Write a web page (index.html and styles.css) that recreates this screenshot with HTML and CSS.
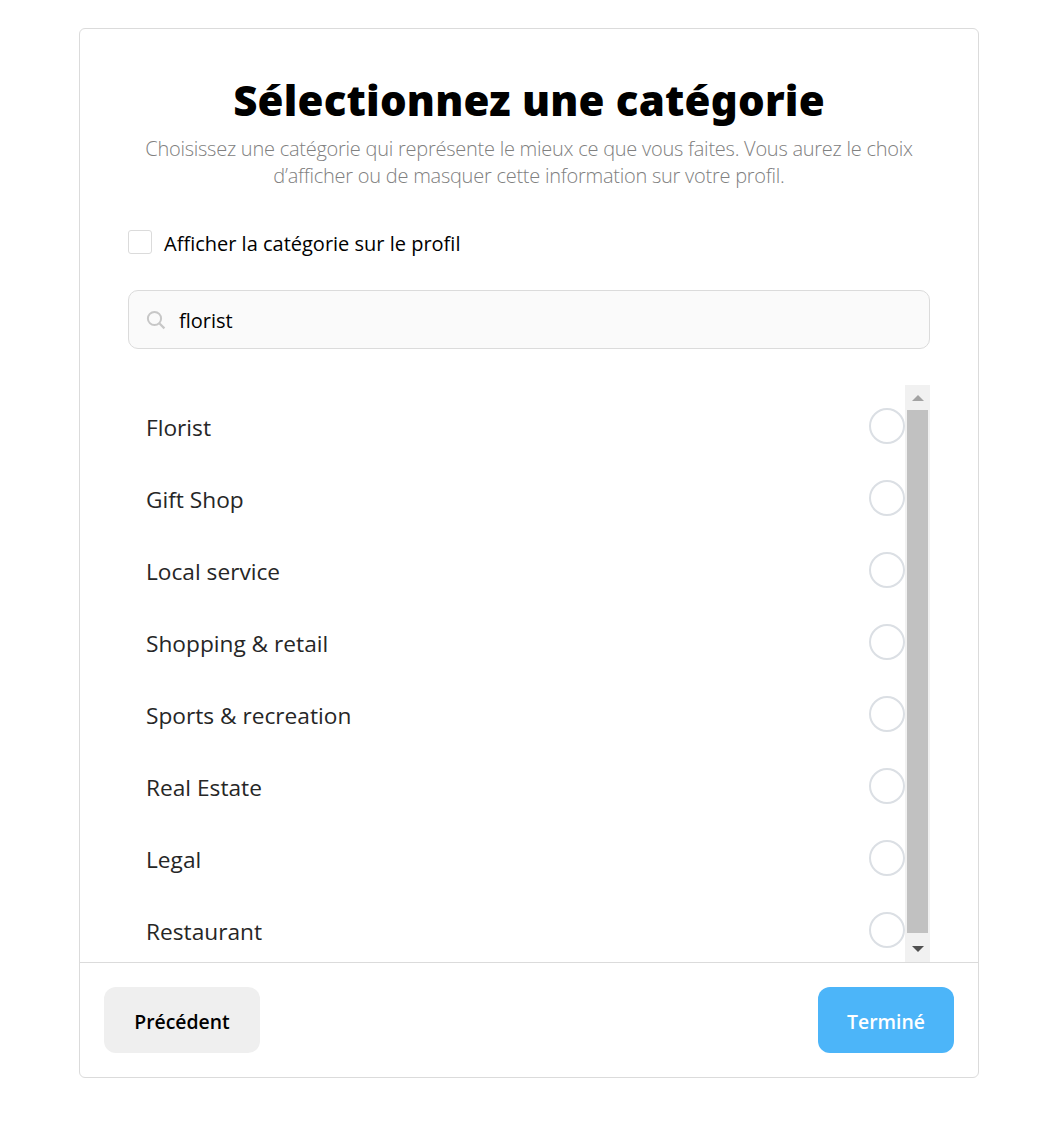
FILE: index.html
```html
<!DOCTYPE html>
<html lang="fr">
<head>
<meta charset="utf-8">
<title>Sélectionnez une catégorie</title>
<link rel="stylesheet" href="styles.css">
</head>
<body>
<main class="card">
  <div class="content">
    <h1 class="title">Sélectionnez une catégorie</h1>
    <p class="subtitle">Choisissez une catégorie qui représente le mieux ce que vous faites. Vous aurez le choix d’afficher ou de masquer cette information sur votre profil.</p>
    <label class="show-row"><span class="checkbox"></span><span class="show-label">Afficher la catégorie sur le profil</span></label>
    <div class="search">
      <svg class="search-icon" width="20" height="20" viewBox="0 0 20 20"><circle cx="8.5" cy="8.5" r="6.6" fill="none" stroke="#c7c7c7" stroke-width="2"/><path d="M13.3 13.3 L18.4 18.4" stroke="#c7c7c7" stroke-width="2.2" fill="none"/></svg>
      <span class="search-text">florist</span>
    </div>
    <div class="list-wrap">
      <ul class="list">
        <li class="item"><span>Florist</span><span class="radio"></span></li>
        <li class="item"><span>Gift Shop</span><span class="radio"></span></li>
        <li class="item"><span>Local service</span><span class="radio"></span></li>
        <li class="item"><span>Shopping &amp; retail</span><span class="radio"></span></li>
        <li class="item"><span>Sports &amp; recreation</span><span class="radio"></span></li>
        <li class="item"><span>Real Estate</span><span class="radio"></span></li>
        <li class="item"><span>Legal</span><span class="radio"></span></li>
        <li class="item"><span>Restaurant</span><span class="radio"></span></li>
      </ul>
      <div class="scrollbar">
        <span class="arrow-up"></span>
        <span class="thumb"></span>
        <span class="arrow-down"></span>
      </div>
    </div>
  </div>
  <footer class="footer">
    <button class="btn btn-back">Précédent</button>
    <button class="btn btn-done">Terminé</button>
  </footer>
</main>
</body>
</html>
```
FILE: styles.css
```css
* { box-sizing: border-box; }
html, body { margin: 0; padding: 0; background: #fff; }
body {
  font-family: "Open Sans", "Noto Sans", "Liberation Sans", sans-serif;
  color: #000;
  padding: 28px 0 50px 79px;
}
.card {
  width: 900px;
  height: 1050px;
  border: 1px solid #dbdbdb;
  border-radius: 6px;
  display: flex;
  flex-direction: column;
}
.content {
  flex: 1;
  min-height: 0;
  padding: 45px 48px 0;
  overflow: hidden;
}
.title {
  margin: 0;
  font-family: "Noto Sans", sans-serif;
  font-size: 42px;
  font-weight: 900;
  line-height: 52px;
  letter-spacing: 0.2px;
  text-align: center;
}
.subtitle {
  margin: 9px 0 0;
  font-size: 20px;
  font-weight: 300;
  line-height: 27px;
  letter-spacing: -0.25px;
  color: #808080;
  text-align: center;
}
.show-row {
  display: flex;
  align-items: center;
  gap: 12px;
  margin-top: 41px;
  font-size: 20px;
  line-height: 24px;
}
.show-label {
  padding-top: 4px;
  line-height: 20px;
}
.checkbox {
  width: 24px;
  height: 24px;
  border: 1px solid #dbdbdb;
  border-radius: 3px;
}
.search {
  display: flex;
  align-items: center;
  gap: 13px;
  height: 59px;
  margin-top: 36px;
  padding: 0 17px;
  background: #fafafa;
  border: 1px solid #dbdbdb;
  border-radius: 10px;
  font-size: 20px;
}
.search-text { padding-top: 2px; }
.list-wrap {
  display: flex;
  margin-top: 36px;
  height: 577px;
}
.list {
  flex: 1;
  margin: 0;
  padding: 6px 0 0;
  list-style: none;
}
.item {
  display: flex;
  align-items: center;
  justify-content: space-between;
  height: 72px;
  padding-left: 18px;
  font-size: 22.7px;
  color: #262626;
}
.radio {
  width: 36px;
  height: 36px;
  margin-top: -2px;
  border: 2px solid #dbdfe4;
  border-radius: 50%;
}
.scrollbar {
  width: 25px;
  height: 577px;
  padding: 0 2px;
  background: #f1f1f1;
  display: flex;
  flex-direction: column;
  align-items: center;
}
.thumb {
  width: 21px;
  height: 523px;
  background: #c1c1c1;
}
.arrow-up, .arrow-down {
  width: 0;
  height: 0;
  border-left: 6px solid transparent;
  border-right: 6px solid transparent;
}
.arrow-up {
  margin: 10px 0 9px;
  border-bottom: 6px solid #a3a3a3;
}
.arrow-down {
  margin: 13px 0 0;
  border-top: 6px solid #505050;
}
.footer {
  display: flex;
  justify-content: space-between;
  padding: 24px;
  border-top: 1px solid #dbdbdb;
}
.btn {
  height: 66px;
  padding-top: 4px;
  border: 0;
  border-radius: 12px;
  font-family: inherit;
  font-size: 19.4px;
  font-weight: 600;
}
.btn-back { width: 156px; background: #efefef; color: #000; }
.btn-done { width: 136px; background: #4cb5f9; color: #fff; }
```
